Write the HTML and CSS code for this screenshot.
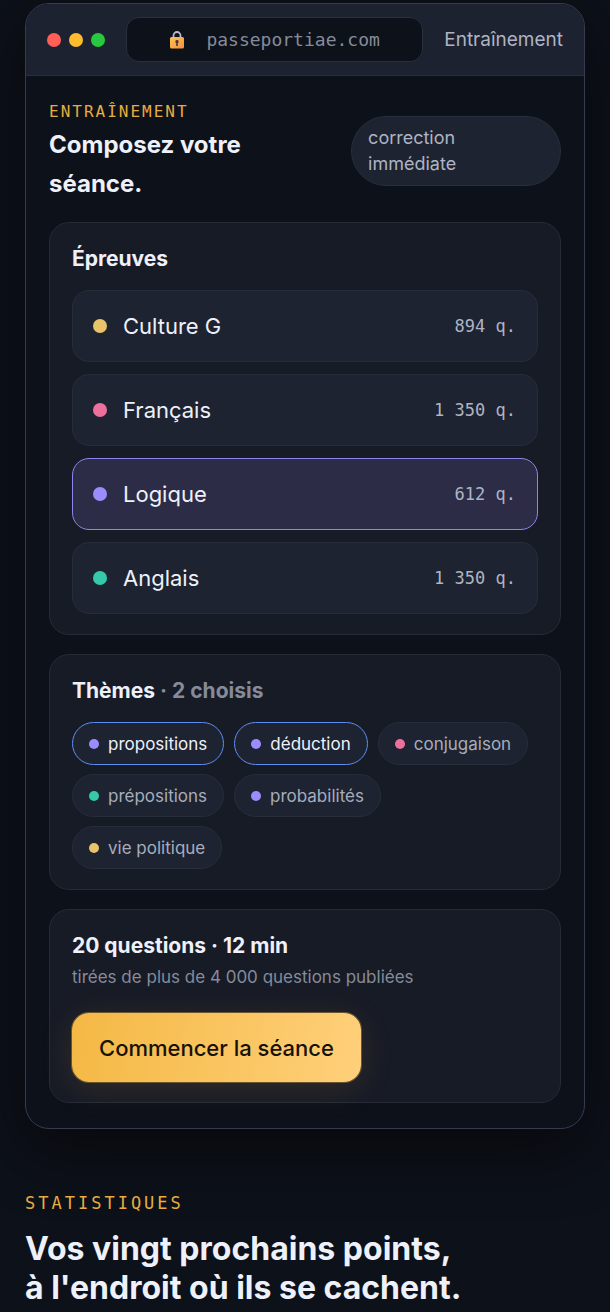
FILE: index.html
```
<!DOCTYPE html>
<html lang="fr">
  <head>
    <meta charset="UTF-8" />
    <meta name="viewport" content="width=device-width, initial-scale=1" />
    <title>Passeport IAE</title>
    <link rel="stylesheet" href="styles.css">
  </head>
  <body>
    <main class="page">
      <div class="window">
        <div class="window-bar">
          <div class="lights">
            <span class="light red"></span>
            <span class="light yellow"></span>
            <span class="light green"></span>
          </div>
          <div class="url">
            <svg class="lock" viewBox="0 0 16 20" aria-hidden="true">
              <defs>
                <linearGradient id="lockBody" x1="0" y1="0" x2="1" y2="1">
                  <stop offset="0" stop-color="#ffc555" />
                  <stop offset="1" stop-color="#f58f3c" />
                </linearGradient>
              </defs>
              <path d="M4.500 9V5.500a3.500 3.500 0 0 1 7 0V9" fill="none" stroke="#b9b6c9" stroke-width="1.8" />
              <rect x="1" y="7" width="14" height="11.500" rx="1.500" fill="url(#lockBody)" />
              <path d="M8 10a1.700 1.700 0 0 1 .8 3.200V16H7.200V13.200A1.700 1.700 0 0 1 8 10z" fill="#4a3440" />
            </svg>
            <span>passeportiae.com</span>
          </div>
          <span class="window-label">Entraînement</span>
        </div>

        <div class="window-body">
          <div class="intro">
            <div>
              <div class="eyebrow small">Entraînement</div>
              <h3 class="intro-title">Composez votre<br>séance.</h3>
            </div>
            <span class="pill">correction<br>immédiate</span>
          </div>

          <section class="panel">
            <h4 class="panel-title">Épreuves</h4>
            <div class="subjects">
              <button class="subject" type="button">
                <span class="dot gold"></span>
                <span>Culture G</span>
                <span class="count">894 q.</span>
              </button>
              <button class="subject" type="button">
                <span class="dot pink"></span>
                <span>Français</span>
                <span class="count">1 350 q.</span>
              </button>
              <button class="subject selected" type="button" aria-pressed="true">
                <span class="dot violet"></span>
                <span>Logique</span>
                <span class="count">612 q.</span>
              </button>
              <button class="subject" type="button">
                <span class="dot teal"></span>
                <span>Anglais</span>
                <span class="count">1 350 q.</span>
              </button>
            </div>
          </section>

          <section class="panel">
            <h4 class="panel-title">Thèmes <span class="faint">· 2 choisis</span></h4>
            <div class="chips">
              <button class="chip on" type="button" aria-pressed="true"><span class="dot violet"></span>propositions</button>
              <button class="chip on" type="button" aria-pressed="true"><span class="dot violet"></span>déduction</button>
              <button class="chip" type="button"><span class="dot pink"></span>conjugaison</button>
              <button class="chip" type="button"><span class="dot teal"></span>prépositions</button>
              <button class="chip" type="button"><span class="dot violet"></span>probabilités</button>
              <button class="chip" type="button"><span class="dot gold"></span>vie politique</button>
            </div>
          </section>

          <section class="panel">
            <h4 class="panel-title summary">20 questions · 12 min</h4>
            <p class="note">tirées de plus de 4 000 questions publiées</p>
            <button class="start" type="button">Commencer la séance</button>
          </section>
        </div>
      </div>

      <section class="stats">
        <div class="eyebrow">Statistiques</div>
        <h2 class="stats-title">Vos vingt prochains points,<br>à l'endroit où ils se cachent.</h2>
      </section>
    </main>
  </body>
</html>
```

FILE: styles.css
```
* {
  box-sizing: border-box;
}
body {
  margin: 0;
  background: #0d1119;
  color: #eef0fa;
  font-family: Inter, "Liberation Sans", sans-serif;
}
h2,
h3,
h4,
p {
  margin: 0;
}
button {
  font: inherit;
  color: inherit;
  cursor: pointer;
}
.page {
  padding: 3px 25px 0;
}

/* browser window */
.window {
  border: 1px solid #383b50;
  border-radius: 24px;
  background: #0d1119;
  overflow: hidden;
  box-shadow: 0 20px 60px #08090d;
}
.window-bar {
  display: flex;
  align-items: center;
  gap: 21px;
  padding: 13px 21px;
  background: #1d2230;
  border-bottom: 1px solid #2a2e3d;
}
.lights {
  display: flex;
  gap: 8px;
}
.light {
  width: 14px;
  height: 14px;
  border-radius: 50%;
}
.red {
  background: #ff5f57;
}
.yellow {
  background: #febc2e;
}
.green {
  background: #28c840;
}
.url {
  flex: 1;
  display: flex;
  align-items: center;
  justify-content: center;
  gap: 21px;
  height: 45px;
  border: 1px solid #2a2e3d;
  border-radius: 13px;
  background: #0d1119;
  color: #858b9a;
  font: 18px "DejaVu Sans Mono", monospace;
}
.lock {
  width: 16px;
  height: 20px;
}
.window-label {
  color: #aeb4c4;
  font-size: 19px;
}
.window-body {
  display: flex;
  flex-direction: column;
  gap: 19px;
  padding: 23px 23px 25px;
}

.intro {
  display: flex;
  align-items: center;
  justify-content: space-between;
}
.eyebrow {
  color: #e6ad40;
  font: 17px/26px "DejaVu Sans Mono", monospace;
  letter-spacing: 3px;
  text-transform: uppercase;
}
.eyebrow.small {
  font-size: 16px;
  letter-spacing: 2px;
}
.intro-title {
  font-size: 24px;
  line-height: 39px;
}
.pill {
  width: 41%;
  padding: 8px 16px;
  border: 1px solid #2a2e3d;
  border-radius: 36px;
  background: #1d2330;
  color: #aeb4c4;
  font-size: 18px;
  line-height: 26px;
}

.panel {
  padding: 22px 22px 20px;
  border: 1px solid #272b38;
  border-radius: 20px;
  background: #171b26;
}
.panel-title {
  margin-bottom: 17px;
  font-size: 21px;
  line-height: 28px;
}
.faint {
  color: #858b9a;
}

.subjects {
  display: grid;
  gap: 12px;
}
.subject {
  display: flex;
  align-items: center;
  gap: 16px;
  height: 72px;
  padding: 0 21px 0 20px;
  border: 1px solid #272d3a;
  border-radius: 17px;
  background: #1d2330;
  font-size: 22px;
}
.subject.selected {
  border-color: #8f83ee;
  background: #2c2c46;
}
.dot {
  width: 14px;
  height: 14px;
  border-radius: 50%;
}
.gold {
  background: #e8c36a;
}
.pink {
  background: #ee6f9c;
}
.violet {
  background: #9b8cff;
}
.teal {
  background: #35c9ab;
}
.count {
  margin-left: auto;
  color: #aeb4c4;
  font: 17px "DejaVu Sans Mono", monospace;
}

.chips {
  display: flex;
  flex-wrap: wrap;
  gap: 9px 10px;
}
.chip {
  display: flex;
  align-items: center;
  gap: 9px;
  height: 43px;
  padding: 0 16px;
  border: 1px solid #272d3a;
  border-radius: 22px;
  background: #1d2330;
  color: #a7adbc;
  font-size: 17px;
}
.chip.on {
  border-color: #5c8ff0;
  color: #eef0fa;
}
.chip .dot {
  width: 10px;
  height: 10px;
}

.panel-title.summary {
  margin-bottom: 4px;
}
.note {
  margin-bottom: 23px;
  color: #858b9a;
  font-size: 17px;
  line-height: 26px;
}
.start {
  height: 69px;
  padding: 0 27px;
  border: 0;
  border-radius: 17px;
  background: linear-gradient(100deg, #f4b844, #ffd07a);
  color: #171107;
  font-size: 22px;
  font-weight: 500;
  box-shadow: 0 0 0 1px #6b5530, 0 6px 34px rgba(244, 184, 68, 0.12);
}

.stats {
  padding: 61px 0 8px;
}
.stats-title {
  margin-top: 13px;
  font-size: 32px;
  line-height: 39px;
}
```
